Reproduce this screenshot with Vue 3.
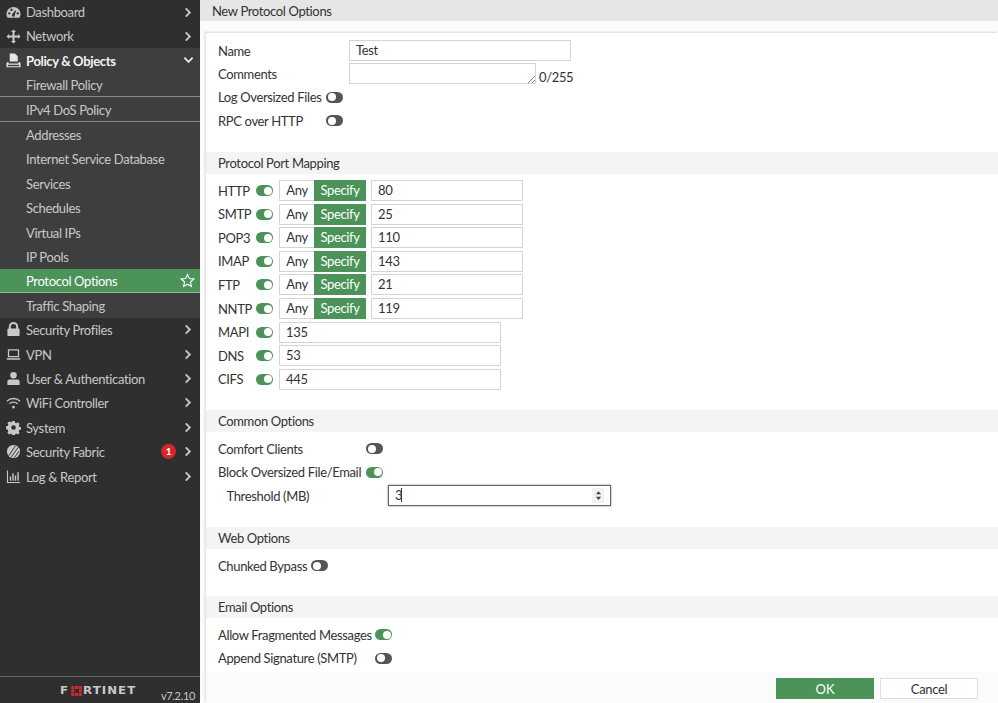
<script setup>
const iconPaths = {
  dash: 'M8 2a7.500 7.500 0 0 0-7.500 7.500c0 1.500.4 2.800 1.200 4h12.600c.8-1.200 1.200-2.500 1.200-4A7.500 7.500 0 0 0 8 2zM3.500 10.200a1.300 1.300 0 1 1 0-2.600 1.300 1.300 0 0 1 0 2.600zM5.800 6.400a1.300 1.300 0 1 1 0-2.600 1.300 1.300 0 0 1 0 2.600zm3.400 5.700a1.700 1.700 0 0 1-2.800-1.800l3.300-4.700.9.500-1.400 5.200c.3.200.2.500 0 .8zM12.500 10.200a1.300 1.300 0 1 1 0-2.600 1.300 1.300 0 0 1 0 2.600z',
  net: 'M8 .5l2.700 2.800H9.100v3.600h3.600V5.300L15.500 8l-2.800 2.700V9.100H9.100v3.600h1.600L8 15.500l-2.700-2.800h1.600V9.100H3.300v1.600L.5 8l2.800-2.700v1.600h3.600V3.300H5.300z',
  policy: 'M4 .5h5.500L12.500 3.500V9H4zM1.500 9.800h1.300v1.500h10.400V9.800h1.300a1 1 0 0 1 1 1v3.500a1 1 0 0 1-1 1h-13a1 1 0 0 1-1-1v-3.500a1 1 0 0 1 1-1zm.5 2.700v1.500h12v-1.500z',
  lock: 'M3 7V5a5 5 0 0 1 10 0v2h.5a1 1 0 0 1 1 1v6a1 1 0 0 1-1 1h-11a1 1 0 0 1-1-1V8a1 1 0 0 1 1-1zm2.200 0h5.600V5a2.800 2.800 0 0 0-5.600 0z',
  vpn: 'M2 2.500h12v8.500H2zm1.300 1.300v5.900h9.400V3.800zM.5 12h15l-.8 1.500H1.300z',
  user: 'M8 1a3.500 3.500 0 1 1 0 7 3.500 3.500 0 0 1 0-7zM3.500 9h9a2 2 0 0 1 2 2v4h-13v-4a2 2 0 0 1 2-2z',
  wifi: 'M8 11.500a1.500 1.500 0 1 1 0 3 1.500 1.500 0 0 1 0-3zM.5 6a11 11 0 0 1 15 0l-1 1.100a9.500 9.500 0 0 0-13 0zM3.200 8.800a7 7 0 0 1 9.600 0l-1 1.100a5.500 5.500 0 0 0-7.600 0z',
  gear: 'M6.700 1h2.600l.4 1.900 1.300.6 1.700-1 1.800 1.800-1 1.700.6 1.300 1.900.4v2.600l-1.900.4-.6 1.300 1 1.700-1.800 1.800-1.700-1-1.300.6-.4 1.900H6.700l-.4-1.900-1.300-.6-1.700 1-1.800-1.800 1-1.700-.6-1.300L0 9.300V6.700l1.900-.4.600-1.300-1-1.700 1.800-1.800 1.700 1 1.300-.6zM8 5.500a2.500 2.500 0 1 0 0 5 2.500 2.500 0 0 0 0-5z',
  log: 'M1 1.500h1.200v12.300H15V15H1zM4 8h1.500v4.500H4zM6.700 4.500h1.500v8H6.700zM9.400 7h1.500v5.500H9.400zM12.100 3.500h1.500v9h-1.500z'
}
const topNav = [
  { label: 'Dashboard', icon: 'dash' },
  { label: 'Network', icon: 'net' }
]
const subNav = [
  { label: 'Firewall Policy', cls: 'lined' },
  { label: 'IPv4 DoS Policy', cls: 'lined' },
  { label: 'Addresses' },
  { label: 'Internet Service Database' },
  { label: 'Services' },
  { label: 'Schedules' },
  { label: 'Virtual IPs' },
  { label: 'IP Pools' },
  { label: 'Protocol Options', cls: 'active', star: true },
  { label: 'Traffic Shaping', cls: 'last' }
]
const bottomNav = [
  { label: 'Security Profiles', icon: 'lock' },
  { label: 'VPN', icon: 'vpn' },
  { label: 'User & Authentication', icon: 'user' },
  { label: 'WiFi Controller', icon: 'wifi' },
  { label: 'System', icon: 'gear' },
  { label: 'Security Fabric', icon: 'fabric', badge: 1 },
  { label: 'Log & Report', icon: 'log' }
]
const specPorts = [
  ['HTTP', '80'], ['SMTP', '25'], ['POP3', '110'], ['IMAP', '143'], ['FTP', '21'], ['NNTP', '119']
]
const plainPorts = [['MAPI', '135'], ['DNS', '53'], ['CIFS', '445']]
const fortinet = ['F', 'RTINET']
</script>

<template>
  <div class="app">
    <aside class="side">
      <nav class="nav">
        <div v-for="n in topNav" :key="n.label" class="item top first-two">
          <svg class="ic" viewBox="0 0 16 16"><path :d="iconPaths[n.icon]" /></svg>
          <span class="lab">{{ n.label }}</span>
          <svg class="chev" viewBox="0 0 8 12"><path d="M1.500 1.500 6 6l-4.500 4.500" /></svg>
        </div>
        <div class="item open">
          <svg class="ic" viewBox="0 0 16 16"><path :d="iconPaths.policy" /></svg>
          <span class="lab">Policy &amp; Objects</span>
          <svg class="chev down" viewBox="0 0 12 8"><path d="M1.500 1.500 6 6l4.500-4.500" /></svg>
        </div>
        <div v-for="s in subNav" :key="s.label" class="item sub" :class="s.cls">
          <span class="lab">{{ s.label }}</span>
          <svg v-if="s.star" class="star" viewBox="0 0 16 16"><path d="M8 1.500l2 4.300 4.700.6-3.500 3.200.9 4.700L8 12l-4.100 2.300.9-4.700L1.300 6.400 6 5.800z" /></svg>
        </div>
        <div v-for="n in bottomNav" :key="n.label" class="item top">
          <svg v-if="n.icon === 'fabric'" class="ic" viewBox="0 0 16 16">
            <circle cx="8" cy="8" r="7" />
            <path class="slash" d="M3 12.500 10 2M5.500 14 13 3.500M9 14.500l5-7" />
          </svg>
          <svg v-else class="ic" viewBox="0 0 16 16"><path :d="iconPaths[n.icon]" /></svg>
          <span class="lab">{{ n.label }}</span>
          <span v-if="n.badge" class="badge">{{ n.badge }}</span>
          <svg class="chev" viewBox="0 0 8 12"><path d="M1.500 1.500 6 6l-4.500 4.500" /></svg>
        </div>
      </nav>
      <footer class="side-foot">
        <span class="logo">{{ fortinet[0] }}<svg class="logo-o" viewBox="0 0 12 12"><path d="M0 0h3.500v3.500H0zM4.300 0h3.400v3.500H4.300zM8.500 0H12v3.500H8.500zM0 4.300h3.500v3.400H0zM8.500 4.300H12v3.400H8.500zM0 8.500h3.500V12H0zM4.300 8.500h3.400V12H4.300zM8.500 8.500H12V12H8.500z" /></svg>{{ fortinet[1] }}</span>
        <span class="ver">v7.2.10</span>
      </footer>
    </aside>

    <main class="main">
      <header class="page-head">New Protocol Options</header>
      <div class="panel">
        <div class="form">
          <section class="sec first">
            <div class="row r-name"><label class="l1">Name</label><div class="inp name">Test</div></div>
            <div class="row r-comm">
              <label class="l1">Comments</label>
              <div class="inp area"><svg class="grip" viewBox="0 0 8 8"><path d="M8 1 1 8M8 5 5 8" /></svg></div>
              <span class="count">0/255</span>
            </div>
            <div class="row r-tog"><label class="l1 tight">Log Oversized Files</label><span class="tog off"></span></div>
            <div class="row r-tog"><label class="l1 tight">RPC over HTTP</label><span class="tog off"></span></div>
          </section>

          <h2 class="sec-head h1">Protocol Port Mapping</h2>
          <section class="sec ports">
            <div v-for="p in specPorts" :key="p[0]" class="port">
              <label class="pl">{{ p[0] }}</label><span class="tog on"></span>
              <div class="seg"><span class="any">Any</span><span class="spec">Specify</span></div>
              <div class="inp pval">{{ p[1] }}</div>
            </div>
            <div v-for="p in plainPorts" :key="p[0]" class="port">
              <label class="pl">{{ p[0] }}</label><span class="tog on"></span>
              <div class="inp pwide">{{ p[1] }}</div>
            </div>
          </section>

          <h2 class="sec-head h2">Common Options</h2>
          <section class="sec common">
            <div class="row r-c"><label class="l2">Comfort Clients</label><span class="tog off"></span></div>
            <div class="row r-c"><label class="l2">Block Oversized File/Email</label><span class="tog on"></span></div>
            <div class="row r-th">
              <label class="l3">Threshold (MB)</label>
              <div class="num">3<span class="caret"></span>
                <span class="spin-box"><svg class="spin" viewBox="0 0 8 12"><path d="M4 1l3 3.500H1zM4 11 1 7.500h6z" /></svg></span>
              </div>
            </div>
          </section>

          <h2 class="sec-head h3">Web Options</h2>
          <section class="sec web">
            <div class="row r-c"><label class="l4">Chunked Bypass</label><span class="tog off"></span></div>
          </section>

          <h2 class="sec-head h4">Email Options</h2>
          <section class="sec email">
            <div class="row r-c"><label class="l5">Allow Fragmented Messages</label><span class="tog on"></span></div>
            <div class="row r-c"><label class="l5">Append Signature (SMTP)</label><span class="tog off"></span></div>
          </section>
        </div>
        <footer class="actions">
          <button class="btn ok">OK</button>
          <button class="btn cancel">Cancel</button>
        </footer>
      </div>
    </main>
  </div>
</template>

<style>
html, body { margin: 0; overflow: hidden; }
</style>

<style scoped>
.app { width: 998px; height: 703px; display: flex; overflow: hidden; font-family: Lato, "Open Sans", sans-serif; font-size: 13px; letter-spacing: -0.350px; color: #333; }
label, .lab { white-space: nowrap; }

.side { width: 200px; flex: none; background: #2f2f2f; display: flex; flex-direction: column; color: #c8c8c8; }
.nav { flex: 1; overflow: hidden; }
.item { height: 24.400px; display: flex; align-items: center; box-sizing: border-box; position: relative; }
.first-two { height: 24px; }
.ic { width: 15px; height: 15px; margin-left: 5.500px; margin-right: 5.500px; fill: #c8c8c8; flex: none; }
.slash { fill: none; stroke: #2f2f2f; stroke-width: 1; }
.lab { flex: 1; padding-top: 1px; }
.first-two .lab { padding-top: 0; }
.chev { width: 8px; height: 11px; fill: none; stroke: #c8c8c8; stroke-width: 2; margin-right: 8px; flex: none; }
.chev.down { width: 11px; height: 8px; stroke: #e8e8e8; margin-right: 6px; }
.open { background: #3e3e3e; color: #f4f4f4; font-weight: 700; }
.open .ic { fill: #e6e6e6; }
.sub { background: #3e3e3e; padding-left: 26px; }
.sub.lined { height: 25px; border-bottom: 1px solid #8a8a8a; }
.sub.active { background: #4b9358; color: #fff; border-bottom: 1px solid #8fbb98; }
.star { width: 15px; height: 15px; fill: none; stroke: #fff; stroke-width: 1.200; margin-right: 5px; }
.badge { width: 15px; height: 15px; border-radius: 50%; background: #d3272b; color: #fff; font-size: 10px; font-weight: 700; line-height: 15px; text-align: center; margin-right: 8px; }
.side-foot { height: 26px; border-top: 1px solid #6a6a6a; position: relative; flex: none; }
.logo { position: absolute; left: 60px; top: 7px; font-size: 11px; font-weight: 700; letter-spacing: 1px; color: #c9c9c9; font-family: "DejaVu Sans", sans-serif; line-height: 14px; transform: scaleX(1.070); transform-origin: left; display: flex; align-items: center; }
.logo-o { width: 11px; height: 10px; fill: #d3272b; margin: 0 1px; }
.ver { position: absolute; left: 161px; top: 12px; font-size: 11px; color: #c8c8c8; }

.main { flex: 1; min-width: 0; display: flex; flex-direction: column; background: #fbfbfb; }
.page-head { height: 21px; background: #e6e6e6; padding-left: 12px; line-height: 23px; flex: none; }
.panel { flex: 1; min-height: 0; display: flex; flex-direction: column; margin: 12px 0 0 6px; background: #fff; box-shadow: -1px -1px 2px #d8d8d8; }
.form { flex: 1; min-height: 0; overflow: hidden; }
.actions { height: 31px; flex: none; background: #fbfbfb; display: flex; gap: 6px; justify-content: flex-end; padding: 6px 20px 0 0; box-sizing: border-box; }
.btn { width: 98px; height: 21px; font: inherit; letter-spacing: inherit; border: 1px solid #ddd; background: #fff; color: #333; padding: 0; }
.btn.ok { background: #4b9358; border-color: #4b9358; color: #fff; font-size: 13px; letter-spacing: 0; }

.sec-head { margin: 0; height: 22px; line-height: 23px; background: #f4f4f4; font-size: 13px; font-weight: 400; padding-left: 12px; }
.h1 { margin-top: 19.500px; }
.h2 { margin-top: 19.500px; }
.h3 { margin-top: 19px; }
.h4 { margin-top: 18.500px; }
.sec { padding-left: 12px; }
.first { padding-top: 6px; }
.row { display: flex; align-items: center; }
.r-name { height: 23px; }
.r-comm { height: 23.500px; }
.r-tog { height: 23.500px; }
.l1 { width: 131px; flex: none; }
.l1.tight { width: 108px; }
.inp { box-sizing: border-box; border: 1px solid #d4d4d4; background: #fff; padding-left: 6px; line-height: 19px; height: 21px; }
.name { width: 222px; }
.area { width: 187px; position: relative; }
.grip { position: absolute; right: 0; bottom: 0; width: 8px; height: 8px; fill: none; stroke: #888; }
.count { margin-left: 3px; margin-top: 6px; }
.tog { display: inline-block; width: 17px; height: 11px; border-radius: 6px; position: relative; flex: none; box-sizing: border-box; }
.tog::after { content: ""; position: absolute; top: 1.500px; width: 8px; height: 8px; border-radius: 50%; background: #fff; }
.tog.off { background: #555; }
.tog.off::after { left: 1.500px; }
.tog.on { background: #4b9358; }
.tog.on::after { right: 1.500px; }

.ports { padding-top: 5px; }
.port { display: flex; align-items: center; height: 23.550px; }
.pl { width: 38px; flex: none; }
.seg { display: flex; height: 21px; margin-left: 6px; box-sizing: border-box; }
.any { width: 35px; box-sizing: border-box; border: 1px solid #d4d4d4; border-right: 0; text-align: center; line-height: 19px; background: #fff; }
.spec { width: 52px; background: #4b9358; color: #fff; text-align: center; line-height: 21px; }
.pval { width: 152px; margin-left: 5px; }
.pwide { width: 222px; margin-left: 6px; }

.common { padding-top: 4.500px; }
.r-c { height: 23.500px; }
.l2 { width: 148px; flex: none; }
.l3 { width: 170px; padding-left: 8.500px; box-sizing: border-box; flex: none; }
.l4 { width: 93px; flex: none; }
.l5 { width: 157px; flex: none; }
.r-th { height: 24px; }
.num { width: 223px; height: 21px; box-sizing: border-box; border: 1px solid #666; box-shadow: 0 0 2px #888; padding-left: 6px; line-height: 19px; position: relative; background: #fff; }
.caret { display: inline-block; width: 1px; height: 14px; background: #333; vertical-align: -2px; margin-left: -1px; }
.spin-box { position: absolute; right: 6px; top: 2px; width: 12px; height: 15px; background: #f2f2f2; display: flex; align-items: center; justify-content: center; }
.spin { width: 7px; height: 11px; fill: #444; }
.web { padding-top: 5px; }
.email { padding-top: 5px; }
</style>
